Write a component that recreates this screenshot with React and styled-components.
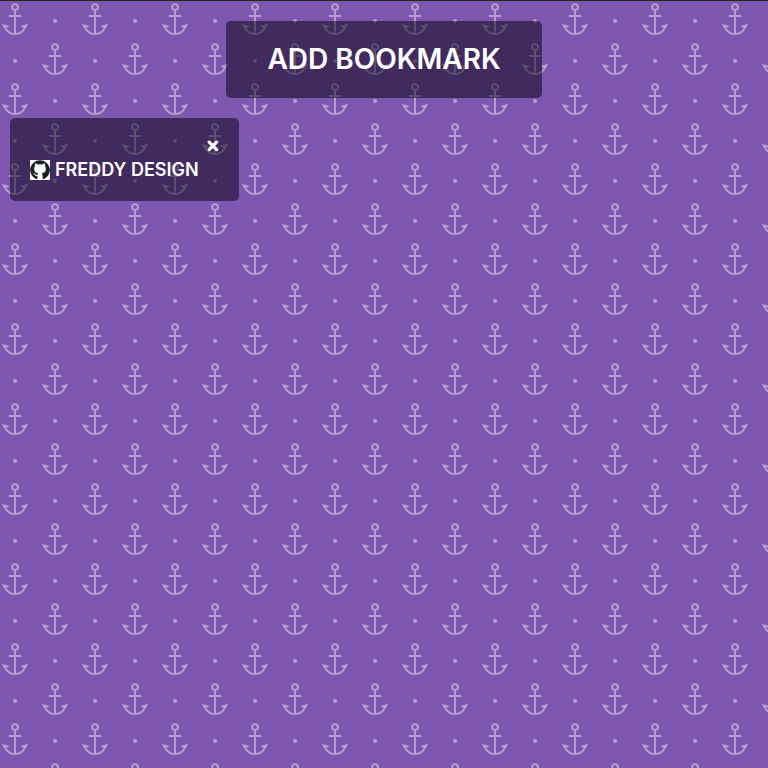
import React, { useState } from "react";
import styled, { createGlobalStyle } from "styled-components";

const anchors = encodeURIComponent(
  `<svg xmlns="http://www.w3.org/2000/svg" width="80" height="80" viewBox="0 0 80 80"><path fill="#ffffff" fill-opacity="0.42" d="M14 16H9v-2h5V9.87a4 4 0 1 1 2 0V14h5v2h-5v15.95A10 10 0 0 0 23.66 27l-3.46-2 8.2-2.2-2.9 5a12 12 0 0 1-21 0l-2.89-5 8.2 2.2-3.47 2A10 10 0 0 0 14 31.95V16zm40 40h-5v-2h5v-4.13a4 4 0 1 1 2 0V54h5v2h-5v15.95A10 10 0 0 0 63.66 67l-3.47-2 8.2-2.2-2.88 5a12 12 0 0 1-21.02 0l-2.88-5 8.2 2.2-3.47 2A10 10 0 0 0 54 71.95V56zm-39 6a2 2 0 1 1 0-4 2 2 0 0 1 0 4zm40-40a2 2 0 1 1 0-4 2 2 0 0 1 0 4zM15 8a2 2 0 1 0 0-4 2 2 0 0 0 0 4zm40 40a2 2 0 1 0 0-4 2 2 0 0 0 0 4z"/></svg>`
);

const GlobalStyle = createGlobalStyle`
  * { box-sizing: border-box; }
  body {
    margin: 0;
    font-family: Inter, "Liberation Sans", sans-serif;
  }
`;

const Page = styled.main`
  min-height: 100vh;
  border-top: 1px solid #222;
  padding: 20px 10px;
  display: flex;
  flex-direction: column;
  align-items: center;
  gap: 20px;
  background-color: #7e57b0;
  background-image: url("data:image/svg+xml,${anchors}");
`;

const AddButton = styled.button`
  border: 0;
  border-radius: 5px;
  padding: 20px 41px;
  background: rgba(4, 0, 12, 0.5);
  color: #fff;
  font: 600 28px/37px Inter, "Liberation Sans", sans-serif;
  text-transform: uppercase;
  cursor: pointer;
`;

const Bookmarks = styled.ul`
  align-self: stretch;
  display: flex;
  flex-wrap: wrap;
  gap: 20px;
  margin: 0;
  padding: 0;
  list-style: none;
`;

const Bookmark = styled.li`
  display: flex;
  flex-direction: column;
  border-radius: 5px;
  padding: 20px;
  background: rgba(4, 0, 12, 0.5);
`;

const RemoveButton = styled.button`
  align-self: flex-end;
  display: flex;
  border: 0;
  padding: 2px 0 6px;
  background: none;
  color: #fff;
  cursor: pointer;
`;

const BookmarkLink = styled.a`
  display: flex;
  align-items: center;
  gap: 5px;
  padding-right: 20px;
  color: #fff;
  font-size: 18px;
  font-weight: 600;
  line-height: 23px;
  text-transform: uppercase;
  text-decoration: none;
`;

function CloseIcon() {
  return (
    <svg width="12" height="12" viewBox="0 0 12 12" aria-hidden="true">
      <path d="M2.2 2.2l7.4 7.4M9.6 2.2l-7.4 7.4" stroke="currentColor" strokeWidth="3.2" strokeLinecap="round" />
    </svg>
  );
}

function GithubIcon() {
  return (
    <svg width="20" height="20" viewBox="0 0 20 20" aria-hidden="true">
      <path fill="#fff" d="M0 0h20v20H0z" />
      <path
        fill="#181f22"
        d="M10 .3a9.7 9.7 0 0 0-4 18.6c1.1.4 1.4.1 1.4-.5v-2.6c-1.7.3-2.5-.2-3-1.3-.3-.6-.7-1-1.2-1.4-.5-.4.6-.7 1.4.3 1 1.5 1.9 1.5 2.9 1.1l.8-1.2C5.5 13 4.1 11.7 4.1 8.8c0-1.1.3-2 .9-2.7-.2-.8-.1-1.7.2-2.5 1 0 1.8.4 2.6 1a9 9 0 0 1 4.4 0c.8-.6 1.6-1 2.6-1 .3.8.4 1.7.2 2.5.6.7.9 1.6.9 2.7 0 2.900-1.4 4.2-4.2 4.5.6.5.9 1.2.9 2.1v3c0 .6.3.9 1.4.5A9.7 9.7 0 0 0 10 .3z"
      />
    </svg>
  );
}

export default function App() {
  const [bookmarks, setBookmarks] = useState([
    { name: "Freddy Design", url: "#freddy-design" },
  ]);
  const remove = (name) => setBookmarks(bookmarks.filter((b) => b.name !== name));

  return (
    <>
      <GlobalStyle />
      <Page>
        <AddButton type="button">Add Bookmark</AddButton>
        <Bookmarks>
          {bookmarks.map((bookmark) => (
            <Bookmark key={bookmark.name}>
              <RemoveButton
                type="button"
                aria-label={`Remove ${bookmark.name}`}
                onClick={() => remove(bookmark.name)}
              >
                <CloseIcon />
              </RemoveButton>
              <BookmarkLink href={bookmark.url}>
                <GithubIcon />
                {bookmark.name}
              </BookmarkLink>
            </Bookmark>
          ))}
        </Bookmarks>
      </Page>
    </>
  );
}
